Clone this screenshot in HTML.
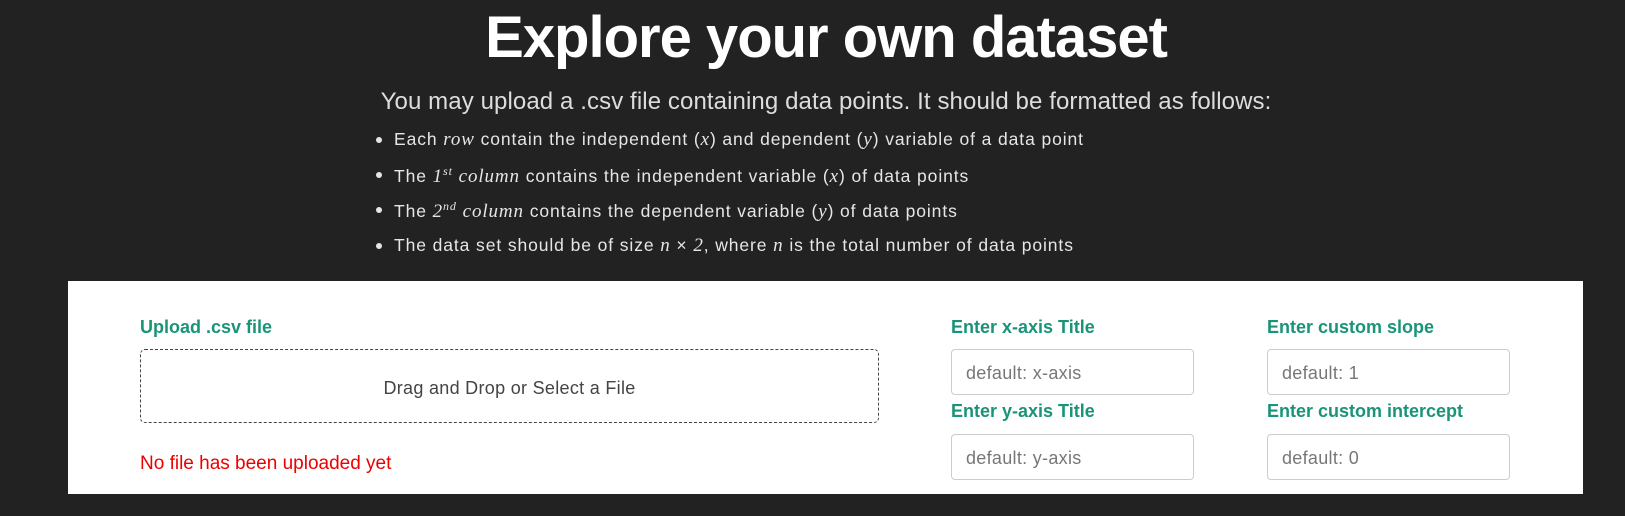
<!DOCTYPE html>
<html><head><meta charset="utf-8"><style>
*{box-sizing:border-box;margin:0;padding:0}
body{width:1625px;height:516px;background:#222;font-family:"Liberation Sans",sans-serif;position:relative;overflow:hidden;color:#ddd}
.a{position:absolute;white-space:nowrap}
h1{position:absolute;left:0;width:1652px;top:4px;text-align:center;color:#fff;font-size:58px;font-weight:bold;letter-spacing:-1px}
.sub{left:0;width:1652px;text-align:center;top:88px;font-size:24px;color:#ddd;letter-spacing:0.1px}
.li{left:376px;font-size:17.5px;color:#e6e6e6;letter-spacing:0.9px}
.li::before{content:"";position:absolute;left:0;top:8px;width:6px;height:6px;border-radius:50%;background:#e6e6e6}
.li span.t{margin-left:18px}
i{font-family:"Liberation Serif",serif;font-size:19px}
sup{font-family:"Liberation Serif",serif;font-style:italic;font-size:12px}
.panel{position:absolute;left:68px;top:281px;width:1515px;height:213px;background:#fff}
.lab{color:#1a9478;font-weight:bold;font-size:18px;letter-spacing:0px}
.drop{position:absolute;left:140px;top:349px;width:739px;height:74px;border:1px dashed #444;border-radius:5px;text-align:center;line-height:76px;font-size:18px;color:#444;letter-spacing:0.3px}
.in{position:absolute;width:243px;height:46px;border:1px solid #ccc;border-radius:4px;padding-left:14px;line-height:46px;font-size:18px;color:#777;letter-spacing:0.3px}
</style></head><body>
<h1>Explore your own dataset</h1>
<div class="a sub">You may upload a .csv file containing data points. It should be formatted as follows:</div>
<div class="a li" style="top:129px"><span class="t">Each <i>row</i> contain the independent (<i>x</i>) and dependent (<i>y</i>) variable of a data point</span></div>
<div class="a li" style="top:164px"><span class="t">The <i>1</i><sup>st</sup> <i>column</i> contains the independent variable (<i>x</i>) of data points</span></div>
<div class="a li" style="top:199px"><span class="t">The <i>2</i><sup>nd</sup> <i>column</i> contains the dependent variable (<i>y</i>) of data points</span></div>
<div class="a li" style="top:235px"><span class="t">The data set should be of size <i>n</i> × <i>2</i>, where <i>n</i> is the total number of data points</span></div>
<div class="panel"></div>
<div class="a lab" style="left:140px;top:317px">Upload .csv file</div>
<div class="drop">Drag and Drop or Select a File</div>
<div class="a" style="left:140px;top:453px;color:#e00;font-size:19px;letter-spacing:0px">No file has been uploaded yet</div>
<div class="a lab" style="left:951px;top:317px">Enter x-axis Title</div>
<div class="in" style="left:951px;top:349px">default: x-axis</div>
<div class="a lab" style="left:951px;top:401px">Enter y-axis Title</div>
<div class="in" style="left:951px;top:434px">default: y-axis</div>
<div class="a lab" style="left:1267px;top:317px">Enter custom slope</div>
<div class="in" style="left:1267px;top:349px">default: 1</div>
<div class="a lab" style="left:1267px;top:401px">Enter custom intercept</div>
<div class="in" style="left:1267px;top:434px">default: 0</div>
</body></html>
